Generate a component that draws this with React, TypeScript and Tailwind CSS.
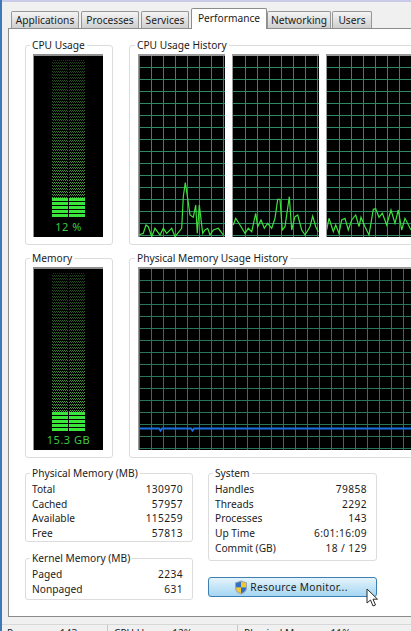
import React from "react";

const FONT = "font-['Noto_Sans',sans-serif]";

function GroupBox({ title, className, legendClass = "left-[4px]", children }: { title: string; className: string; legendClass?: string; children?: React.ReactNode }) {
  return (
    <div className={`relative shrink-0 rounded-[3px] border border-[#dcdcdc] ${className}`}>
      <span className={`absolute -top-[8px] bg-white px-[2px] text-[10.2px] leading-[15px] whitespace-nowrap text-[#1c1c1c] ${legendClass}`}>
        {title}
      </span>
      {children}
    </div>
  );
}

function Meter({ bright, label }: { bright: [number, number]; label: string }) {
  const [top, bottom] = bright;
  const id = label.replace(/[^a-z0-9]/gi, "");
  const stripes: number[] = [];
  for (let y = top; y < bottom - 1; y += 4) stripes.push(y);
  return (
    <div className="relative h-[183px] w-[70px] border-t-2 border-l border-[#8f8f8f] bg-black">
      <svg width="69" height="181" className="block">
        <defs>
          <pattern id={`dots${id}`} width="2" height="3" patternUnits="userSpaceOnUse">
            <rect x="0" y="0" width="1" height="1" fill="#4fae45" />
            <rect x="1" y="1" width="1" height="1" fill="#3c8f38" />
          </pattern>
          <linearGradient id={`fade${id}`} x1="0" x2="0" y1="0" y2="1">
            <stop offset="0" stopColor="#000" stopOpacity="0.6" />
            <stop offset="1" stopColor="#000" stopOpacity="0" />
          </linearGradient>
        </defs>
        <rect x="18" y="4" width="33" height={top - 4} fill={`url(#dots${id})`} />
        <rect x="18" y="4" width="33" height={top - 4} fill={`url(#fade${id})`} />
        {stripes.map((y) => (
          <rect key={y} x="18" y={y} width="33" height="3" fill="#3be63b" />
        ))}
        <rect x="34" y="4" width="1" height={bottom - 4} fill="#000" />
      </svg>
      <div className="absolute bottom-[3px] left-0 w-full text-center text-[11px] leading-[14px] tracking-[0.5px] text-[#41c841]">
        {label}
      </div>
    </div>
  );
}

function Grid({ w, h, offsetX, color, children }: { w: number; h: number; offsetX: number; color: string; children?: React.ReactNode }) {
  const xs: number[] = [];
  const ys: number[] = [];
  for (let x = offsetX; x < w; x += 12) xs.push(x);
  for (let y = 11; y < h; y += 12) ys.push(y);
  return (
    <svg width={w} height={h} className="block">
      <rect width={w} height={h} fill="#000" />
      {xs.map((x) => (
        <line key={`x${x}`} x1={x + 0.5} x2={x + 0.5} y1="0" y2={h} stroke={color} />
      ))}
      {ys.map((y) => (
        <line key={`y${y}`} x1="0" x2={w} y1={y + 0.5} y2={y + 0.5} stroke={color} />
      ))}
      {children}
    </svg>
  );
}

function HistoryGraph({ w, points, offsetX }: { w: number; points: string; offsetX: number }) {
  return (
    <div className="h-[183px] shrink-0 border-t-2 border-l border-[#9a9a9a] bg-black" style={{ width: w }}>
      <Grid w={w - 1} h={181} offsetX={offsetX} color="#2f8a63">
        <polyline points={points} fill="none" stroke="#3ee03e" strokeWidth="1.2" />
      </Grid>
    </div>
  );
}

const toPoints = (raw: [number, number][], ox: number, oy: number) =>
  raw.map(([x, y]) => `${(x / 3 + ox).toFixed(1)},${(y / 3 + oy).toFixed(1)}`).join(" ");

const trace1 = toPoints(
  [[415, 315], [430, 310], [438, 285], [445, 290], [455, 320], [465, 295], [480, 315], [490, 295], [500, 310], [515, 295], [525, 320], [545, 295], [550, 200], [556, 158], [563, 205], [570, 255], [580, 262], [587, 225], [592, 310], [598, 225], [608, 310], [615, 300], [623, 295], [630, 315], [640, 300], [655, 295], [670, 315]],
  -139,
  130 - 56
);
const trace2 = toPoints(
  [[85, 285], [92, 265], [105, 285], [120, 310], [130, 295], [140, 305], [152, 250], [158, 290], [168, 270], [178, 295], [188, 280], [200, 295], [210, 265], [218, 208], [225, 208], [232, 300], [240, 290], [253, 200], [260, 300], [270, 260], [278, 255], [290, 300], [300, 315], [315, 290], [323, 258], [332, 290], [340, 305]],
  205 - 233,
  130 - 56
);
const trace3 = toPoints(
  [[365, 300], [372, 265], [385, 305], [392, 285], [402, 310], [410, 270], [420, 265], [430, 300], [440, 270], [452, 255], [462, 290], [468, 262], [480, 290], [492, 315], [505, 238], [512, 236], [522, 262], [532, 250], [545, 285], [558, 240], [570, 280], [580, 240], [590, 300], [600, 265], [618, 300]],
  205 - 327,
  130 - 56
);

function Rows({ rows }: { rows: [string, string][] }) {
  return (
    <div className="flex flex-col">
      {rows.map(([k, v]) => (
        <div key={k} className="flex h-[14.6px] items-center justify-between text-[10.2px] leading-[14px] text-[#1c1c1c]">
          <span>{k}</span>
          <span className="tracking-[0.4px]">{v}</span>
        </div>
      ))}
    </div>
  );
}

function Tab({ label, className, active }: { label: string; className: string; active?: boolean }) {
  return active ? (
    <div className={`z-10 -mb-px flex h-[21px] items-start justify-center rounded-t-[2px] border border-b-0 border-[#8c8c8c] bg-white pt-[2px] text-[10.2px] leading-[14px] text-[#1c1c1c] ${className}`}>
      {label}
    </div>
  ) : (
    <div className={`flex h-[17px] items-center justify-center rounded-t-[2px] border border-b-0 border-[#969696] bg-gradient-to-b from-[#f4f4f4] to-[#cfcfcf] text-[10.2px] leading-[14px] text-[#1c1c1c] ${className}`}>
      {label}
    </div>
  );
}

export default function App() {
  return (
    <div className={`flex h-[631px] w-[411px] overflow-hidden border-l-[2px] border-[#3f78b8] bg-[#f0f0f0] ${FONT}`}>
      <div className="flex w-[409px] flex-col overflow-hidden">
        <div className="h-[2px] shrink-0 bg-[#c9cbe8]" />
        {/* Tab strip */}
        <div className="flex h-[26px] shrink-0 items-end gap-[2px] pl-[9px]">
          <Tab label="Applications" className="w-[68px]" />
          <Tab label="Processes" className="w-[58px]" />
          <Tab label="Services" className="w-[48px]" />
          <Tab label="Performance" className="w-[76px]" active />
          <Tab label="Networking" className="-ml-[2px] w-[64px]" />
          <Tab label="Users" className="-ml-px w-[40px]" />
        </div>
        {/* Tab page */}
        <div className="ml-[6px] flex h-[589px] shrink-0 flex-col gap-[13px] overflow-hidden border-t border-b border-l border-[#8c8c8c] bg-white pt-[16px] pl-[16px]">
          <div className="flex shrink-0 gap-[16px]">
            <GroupBox title="CPU Usage" className="h-[200px] w-[88px] pt-[8px] pl-[7px]">
              <Meter bright={[142, 162]} label="12 %" />
            </GroupBox>
            <GroupBox title="CPU Usage History" legendClass="left-[5px]" className="h-[200px] w-[300px] pt-[8px] pl-[8px]">
              <div className="flex gap-[7px]">
                <HistoryGraph w={87} points={trace1} offsetX={0} />
                <HistoryGraph w={87} points={trace2} offsetX={12} />
                <HistoryGraph w={87} points={trace3} offsetX={12} />
              </div>
            </GroupBox>
          </div>
          <div className="flex shrink-0 gap-[16px]">
            <GroupBox title="Memory" className="h-[200px] w-[88px] pt-[8px] pl-[7px]">
              <Meter bright={[143, 162]} label="15.3 GB" />
            </GroupBox>
            <GroupBox title="Physical Memory Usage History" legendClass="left-[5px]" className="h-[200px] w-[300px] pt-[8px] pl-[8px]">
              <div className="h-[183px] w-[290px] border-t-2 border-l border-[#9a9a9a] bg-black">
                <Grid w={289} h={181} offsetX={0} color="#2a7558">
                  <polyline points="0,159.500 20,159.500 21.500,161.500 23,159.500 52,159.500 53.500,161.500 55,159.500 289,159.500" fill="none" stroke="#1a70e0" strokeWidth="2" />
                </Grid>
              </div>
            </GroupBox>
          </div>
          <div className="flex shrink-0 gap-[15px] pt-[2px]">
            <div className="flex w-[168px] shrink-0 flex-col gap-[16px]">
              <GroupBox title="Physical Memory (MB)" className="h-[69px] w-[168px] pt-[8px] pr-[9px] pl-[6px]">
                <Rows rows={[["Total", "130970"], ["Cached", "57957"], ["Available", "115259"], ["Free", "57813"]]} />
              </GroupBox>
              <GroupBox title="Kernel Memory (MB)" className="h-[42px] w-[168px] pt-[8px] pr-[9px] pl-[6px]">
                <Rows rows={[["Paged", "2234"], ["Nonpaged", "631"]]} />
              </GroupBox>
            </div>
            <div className="flex w-[169px] shrink-0 flex-col gap-[16px]">
              <GroupBox title="System" className="h-[88px] w-[169px] pt-[8px] pr-[9px] pl-[6px]">
                <Rows rows={[["Handles", "79858"], ["Threads", "2292"], ["Processes", "143"], ["Up Time", "6:01:16:09"], ["Commit (GB)", "18 / 129"]]} />
              </GroupBox>
              <div className="relative flex h-[20px] w-[169px] items-center justify-center gap-[2px] rounded-[3px] border border-[#3c7fb1] bg-gradient-to-b from-[#e6f4fc] via-[#c4e5f7] to-[#a5d6f2] pr-[3px] text-[10.2px] leading-[14px] tracking-[0.3px] text-[#1c1c1c]">
                <svg width="14" height="15" viewBox="0 0 14 15">
                  <path d="M7 .5 13 2.500V8c0 3.200-2.800 5.400-6 6.500C3.800 13.400 1 11.200 1 8V2.500Z" fill="#9aa7b0" />
                  <path d="M7 1.800 7 7.500 2 7.500V3.200Z" fill="#2f6fc4" />
                  <path d="M7 1.800 12 3.200V7.500H7Z" fill="#f1c82e" />
                  <path d="M2 7.500H7V13.300C4.400 12.300 2 10.600 2 8Z" fill="#f1c82e" />
                  <path d="M7 7.500H12V8C12 10.600 9.600 12.300 7 13.300Z" fill="#2f6fc4" />
                </svg>
                <span>Resource Monitor...</span>
                <svg width="13" height="20" viewBox="0 0 13 20" className="absolute top-[10px] left-[157px]">
                  <path d="M1 1V15L4.500 12L7 18L9.500 17L7 11.200H11.500Z" fill="#fff" stroke="#2a2a2a" strokeWidth="1" strokeLinejoin="round" />
                </svg>
              </div>
            </div>
          </div>
        </div>
        {/* Status bar */}
        <div className="mt-[7px] flex h-[20px] shrink-0 border-t border-[#d8d8d8] text-[10.2px] leading-[14px] text-[#1c1c1c]">
          <div className="h-full w-[106px] shrink-0 border-r border-[#c8c8c8] pt-[1px] pl-[5px] whitespace-nowrap">Processes: 143</div>
          <div className="h-full w-[130px] shrink-0 border-r border-[#c8c8c8] pt-[1px] pl-[6px] whitespace-nowrap">CPU Usage: 12%</div>
          <div className="h-full pt-[1px] pl-[6px] whitespace-nowrap">Physical Memory: 11%</div>
        </div>
      </div>
    </div>
  );
}
